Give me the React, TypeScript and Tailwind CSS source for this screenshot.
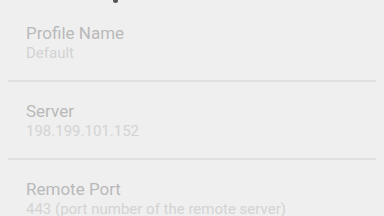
import React from 'react';

const items = [
  { title: 'Profile Name', value: 'Default' },
  { title: 'Server', value: '198.199.101.152' },
  { title: 'Remote Port', value: '443 (port number of the remote server)' },
];

export default function App() {
  return (
    <div className="w-[384px] h-[216px] overflow-hidden bg-[#efefef] font-['Roboto',sans-serif]">
      {/* cropped bit of the header above */}
      <div className="h-[4px] pl-[113px]">
        <div className="w-[5px] h-[3px] rounded-b-full bg-[#555]" />
      </div>
      {items.map((item, i) => (
        <div key={item.title}>
          <div className="px-[26px] pt-[19px] pb-[17px]">
            <div className="text-[17px] leading-[20px] text-[#b9b9b9]">{item.title}</div>
            <div className="text-[15px] leading-[20px] text-[#d3d3d3]">{item.value}</div>
          </div>
          {i < items.length - 1 && <div className="mx-[8px] h-[2px] bg-[#e0e0e0]" />}
        </div>
      ))}
    </div>
  );
}
